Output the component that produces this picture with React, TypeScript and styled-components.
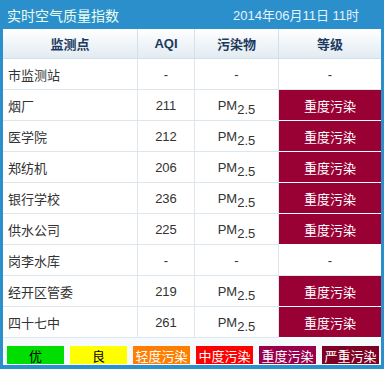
import * as React from "react";
import styled, { createGlobalStyle } from "styled-components";

const GlobalStyle = createGlobalStyle`
    body {
        margin: 0;
        font-family: "Liberation Sans", "Noto Sans CJK SC", sans-serif;
    }
`;

type Row = { name: string; aqi: string; pm: boolean; level: string };

const rows: Row[] = [
    { name: "市监测站", aqi: "-", pm: false, level: "" },
    { name: "烟厂", aqi: "211", pm: true, level: "重度污染" },
    { name: "医学院", aqi: "212", pm: true, level: "重度污染" },
    { name: "郑纺机", aqi: "206", pm: true, level: "重度污染" },
    { name: "银行学校", aqi: "236", pm: true, level: "重度污染" },
    { name: "供水公司", aqi: "225", pm: true, level: "重度污染" },
    { name: "岗李水库", aqi: "-", pm: false, level: "" },
    { name: "经开区管委", aqi: "219", pm: true, level: "重度污染" },
    { name: "四十七中", aqi: "261", pm: true, level: "重度污染" },
];

const legend = [
    { label: "优", bg: "#00dd00", color: "#000" },
    { label: "良", bg: "#ffff00", color: "#000" },
    { label: "轻度污染", bg: "#ff7e00", color: "#fff" },
    { label: "中度污染", bg: "#ff0000", color: "#fff" },
    { label: "重度污染", bg: "#99004c", color: "#fff" },
    { label: "严重污染", bg: "#7e0023", color: "#fff" },
];

const App: React.FunctionComponent = (): JSX.Element => {
    return (
        <>
            <GlobalStyle />
            <Frame>
                <TitleBar>
                    <Title>实时空气质量指数</Title>
                    <Stamp>2014年06月11日 11时</Stamp>
                </TitleBar>
                <Panel>
                    <Grid>
                        <HeadCell>监测点</HeadCell>
                        <HeadCell>AQI</HeadCell>
                        <HeadCell>污染物</HeadCell>
                        <HeadCell $last>等级</HeadCell>
                        {rows.map((r) => (
                            <React.Fragment key={r.name}>
                                <NameCell>{r.name}</NameCell>
                                <Cell>{r.aqi}</Cell>
                                <Cell>
                                    {r.pm ? (
                                        <>
                                            PM<Sub>2.5</Sub>
                                        </>
                                    ) : (
                                        "-"
                                    )}
                                </Cell>
                                {r.level ? (
                                    <LevelCell>{r.level}</LevelCell>
                                ) : (
                                    <Cell $last>-</Cell>
                                )}
                            </React.Fragment>
                        ))}
                    </Grid>
                    <Legend>
                        {legend.map((l) => (
                            <LegendBox key={l.label} $bg={l.bg} $fg={l.color}>
                                {l.label}
                            </LegendBox>
                        ))}
                    </Legend>
                </Panel>
            </Frame>
        </>
    );
};

export default App;

const Frame = styled.div`
    width: 384px;
    height: 369px;
    box-sizing: border-box;
    background: #2b8fcb;
    padding: 0 3px 4px;
    display: flex;
    flex-direction: column;
`;

const TitleBar = styled.div`
    height: 29px;
    display: flex;
    align-items: center;
    justify-content: space-between;
    padding: 0 22px 0 4px;
    font-size: 14px;
`;

const Title = styled.span`
    color: #eafff2;
`;

const Stamp = styled.span`
    color: #e2f4ff;
    font-size: 13px;
`;

const Panel = styled.div`
    flex: 1;
    background: #f7fafc;
    display: flex;
    flex-direction: column;
`;

const Grid = styled.div`
    display: grid;
    grid-template-columns: 135px 57px 84px 102px;
    grid-template-rows: 30px repeat(9, 31px);
    background: #fff;
`;

const HeadCell = styled.div<{ $last?: boolean }>`
    display: flex;
    align-items: center;
    justify-content: center;
    box-sizing: border-box;
    background: linear-gradient(#ffffff, #e2ebf2);
    border-bottom: 1px solid #d3e1ea;
    border-right: ${(p) => (p.$last ? "none" : "1px solid #d3e1ea")};
    color: #1c3a60;
    font-weight: bold;
    font-size: 13px;
`;

const Cell = styled.div<{ $last?: boolean }>`
    display: flex;
    align-items: center;
    justify-content: center;
    box-sizing: border-box;
    border-bottom: 1px solid #dbe6ee;
    border-right: ${(p) => (p.$last ? "none" : "1px solid #dbe6ee")};
    color: #333;
    font-size: 13px;
`;

const NameCell = styled(Cell)`
    justify-content: flex-start;
    padding-left: 5px;
`;

const LevelCell = styled.div`
    display: flex;
    align-items: center;
    justify-content: center;
    box-sizing: border-box;
    background: #990033;
    border-bottom: 1px solid #fff;
    color: #fff;
    font-size: 13px;
`;

const Sub = styled.span`
    position: relative;
    top: 4px;
`;

const Legend = styled.div`
    flex: 1;
    display: flex;
    align-items: flex-start;
    gap: 6px;
    padding: 8px 2px 0 4px;
`;

const LegendBox = styled.div<{ $bg: string; $fg: string }>`
    width: 57px;
    height: 18px;
    display: flex;
    align-items: center;
    justify-content: center;
    background: ${(p) => p.$bg};
    color: ${(p) => p.$fg};
    font-size: 13px;
`;
